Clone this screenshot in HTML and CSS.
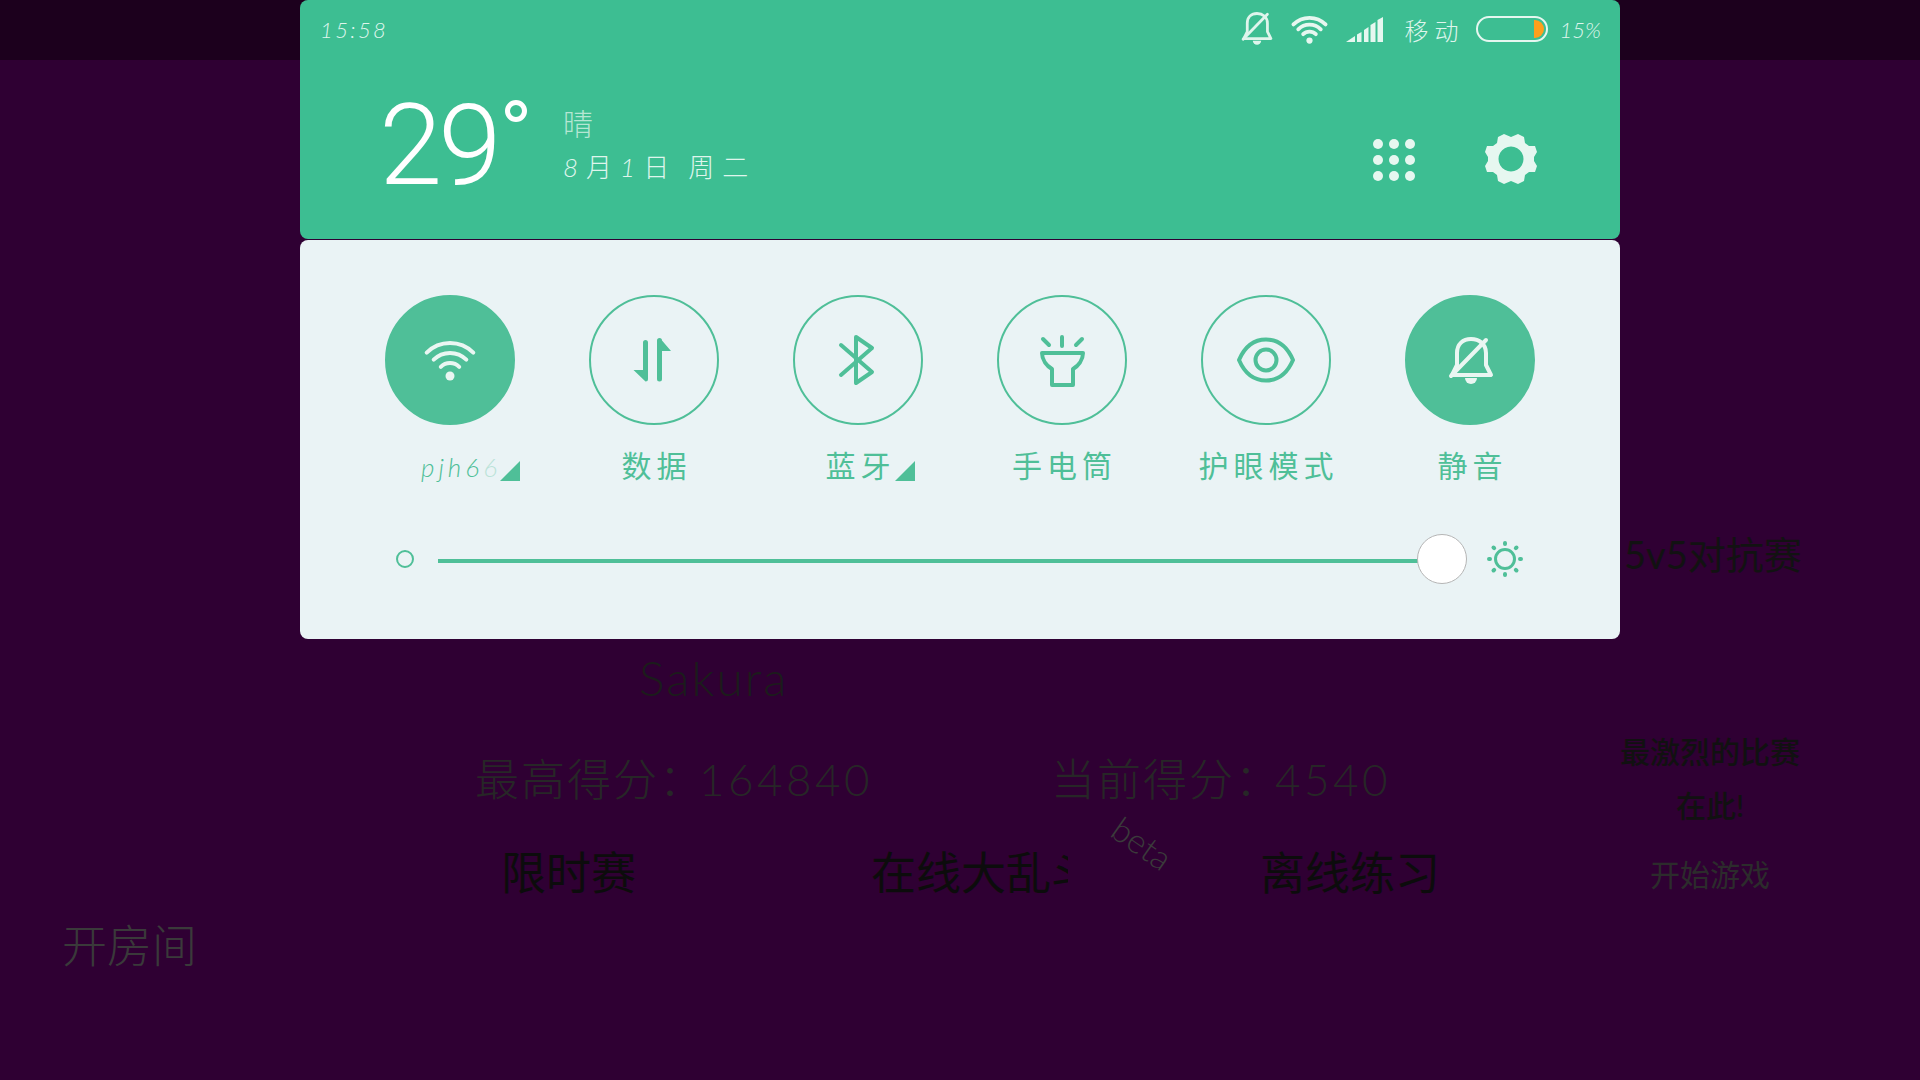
FILE: index.html
```html
<!DOCTYPE html>
<html lang="zh-CN">

<head>
  <meta charset="UTF-8">
  <meta name="viewport" content="width=device-width, initial-scale=1.0">
  <title>Notification shade</title>
  <link rel="stylesheet" href="styles.css">
</head>

<body>
  <svg class="defs" width="0" height="0">
    <defs>
      <g id="ico-wifi">
        <path class="line" d="M41.7 57.700a33 33 0 0 1 46.600 0M48.700 64.700a23 23 0 0 1 32.600 0M55.800 71.800a13 13 0 0 1 18.400 0" />
        <circle class="solid" cx="65" cy="81" r="4.500" />
      </g>
      <g id="ico-bell">
        <path class="line" d="M47 80l5-10V58c0-9 6-14 14-14s15 5 15 14v12l5 10z" />
        <path class="line" d="M81 45L46 81" />
        <path class="solid" d="M60 83h12a6 6 0 0 1-12 0z" />
      </g>
    </defs>
  </svg>

  <div class="game">
    <div class="game-strip"></div>
    <span class="game-text versus">5v5对抗赛</span>
    <span class="game-text sakura">Sakura</span>
    <span class="game-text score-high">最高得分：<span class="digits">164840</span></span>
    <span class="game-text score-now">当前得分：<span class="digits">4540</span></span>
    <span class="game-text mode-time">限时赛</span>
    <span class="game-text mode-online">在线大乱斗</span>
    <span class="game-text beta">beta</span>
    <span class="game-text mode-offline">离线练习</span>
    <span class="game-text room">开房间</span>
    <div class="game-text slogan">最激烈的比赛<br>在此!</div>
    <span class="game-text start">开始游戏</span>
  </div>

  <main class="shade">
    <section class="top-card">
      <div class="status">
        <span class="time">15:58</span>
        <div class="status-right">
          <svg class="st-bell" viewBox="43 42 46 50"><use href="#ico-bell" /></svg>
          <svg class="st-wifi" viewBox="37 44 56 42"><use href="#ico-wifi" /></svg>
          <svg class="st-signal" viewBox="0 0 37 25">
            <polygon points="0,25 9,19 9,25" />
            <polygon points="11,25 11,17.500 15.500,15 15.500,25" />
            <polygon points="18,25 18,13 22.500,10 22.500,25" />
            <polygon points="24.500,25 24.500,8 29.500,5 29.500,25" />
            <polygon points="31.500,25 31.500,3 37,0 37,25" />
          </svg>
          <span class="carrier">移动</span>
          <div class="battery"><div class="battery-fill"></div></div>
          <span class="percent">15%</span>
        </div>
      </div>

      <div class="weather">
        <div class="temp">29<span class="deg"></span></div>
        <div class="weather-info">
          <div class="sky">晴</div>
          <div class="date"><i>8</i>月<i>1</i>日 周二</div>
        </div>
        <div class="dots">
          <span></span><span></span><span></span>
          <span></span><span></span><span></span>
          <span></span><span></span><span></span>
        </div>
        <svg class="gear" viewBox="0 0 52 52">
          <path fill-rule="evenodd" d="M19 1l7 3 7-3 6 3 1 6 4 3 6 0 2 6-3 5 0 4 3 5-2 6-6 0-4 3-1 6-6 3-7-3-7 3-6-3-1-6-4-3-6 0-2-6 3-5 0-4-3-5 2-6 6 0 4-3 1-6zM26 13.500a12.500 12.500 0 1 0 .01 0z" />
        </svg>
      </div>
    </section>

    <section class="ctrl-card">
      <div class="toggles">
        <div class="toggle">
          <div class="round on"><svg class="round-ico" viewBox="0 0 130 130"><use href="#ico-wifi" /></svg></div>
          <div class="label label-wifi">
            <span class="latin">pjh6<span class="fade">6</span></span><span class="corner"></span>
          </div>
        </div>
        <div class="toggle">
          <div class="round">
            <svg class="round-ico" viewBox="0 0 130 130">
              <path class="solid" d="M54 47.500a2.500 2.500 0 0 1 5 0V84a2.500 2.500 0 0 1-2.500 2.500L44.500 75H54z" />
              <path class="solid" d="M76 45.500a2.500 2.500 0 0 0-5 0V84a2.500 2.500 0 0 0 5 0V56h9z" transform="translate(-3 0)" />
            </svg>
          </div>
          <div class="label">数据</div>
        </div>
        <div class="toggle">
          <div class="round">
            <svg class="round-ico" viewBox="0 0 130 130">
              <path class="line" d="M48 50l31 27-16 11V42l16 11-31 27" />
            </svg>
          </div>
          <div class="label">蓝牙<span class="corner"></span></div>
        </div>
        <div class="toggle">
          <div class="round">
            <svg class="round-ico" viewBox="0 0 130 130">
              <path class="line" d="M45 58h41c0 7-5 13-10 16v16H55V74c-5-3-10-9-10-16z" />
              <path class="line" d="M65 42v9M46 44l6 6M85 44l-6 6" />
            </svg>
          </div>
          <div class="label">手电筒</div>
        </div>
        <div class="toggle">
          <div class="round">
            <svg class="round-ico" viewBox="0 0 130 130">
              <path class="line" d="M38 65c6-14 16-20.500 27-20.500S86 51 92 65c-6 14-16 20.500-27 20.500S44 79 38 65z" />
              <circle class="line" cx="65" cy="65" r="10.500" />
            </svg>
          </div>
          <div class="label">护眼模式</div>
        </div>
        <div class="toggle">
          <div class="round on"><svg class="round-ico" viewBox="0 0 130 130"><use href="#ico-bell" /></svg></div>
          <div class="label">静音</div>
        </div>
      </div>

      <div class="brightness">
        <span class="dim"></span>
        <div class="track"><span class="thumb"></span></div>
        <svg class="sun" viewBox="0 0 38 38">
          <circle class="sun-ring" cx="19" cy="19" r="9.500" />
          <path class="rays" d="M19 3v1M19 34v1M3 19h1M34 19h1M7.500 7.500l.7.7M30.500 7.500l-.7.7M7.500 30.500l.7-.7M30.500 30.500l-.7-.7" />
        </svg>
      </div>
    </section>
  </main>
</body>

</html>
```

FILE: styles.css
```css
* {
  box-sizing: border-box;
}

body {
  background: #2f0033;
  font-family: "Lato", "Noto Sans CJK SC", sans-serif;
  height: 1080px;
  margin: 0;
  overflow: hidden;
  width: 1920px;
}

.defs {
  position: absolute;
}

/* game behind the shade */
.game {
  height: 1080px;
  left: 0;
  overflow: hidden;
  position: absolute;
  top: 0;
  width: 1920px;
}

.game-strip {
  background: #1c001d;
  height: 60px;
}

.game-text {
  line-height: 1;
  position: absolute;
  white-space: nowrap;
}

.versus {
  color: #121212;
  font-size: 38px;
  left: 1624px;
  top: 535px;
}

.sakura {
  color: #1c1c1c;
  font-size: 48px;
  font-weight: 300;
  left: 639px;
  letter-spacing: 2px;
  top: 654px;
}

.score-high,
.score-now {
  color: #272727;
  font-size: 44px;
  font-weight: 300;
  letter-spacing: 2px;
}

.digits {
  letter-spacing: 3.5px;
  margin-left: -6px;
}

.score-high {
  left: 475px;
  top: 757px;
}

.score-now {
  left: 1051px;
  top: 757px;
}

.mode-time,
.mode-online,
.mode-offline {
  color: #0c0c0c;
  font-size: 45px;
}

.mode-time {
  left: 501px;
  top: 851px;
}

.mode-online {
  left: 871px;
  overflow: hidden;
  top: 851px;
  width: 197px;
}

.mode-offline {
  left: 1260px;
  top: 851px;
}

.beta {
  color: #3b3b3b;
  font-size: 34px;
  font-weight: 300;
  left: 1110px;
  top: 826px;
  transform: rotate(35deg);
}

.room {
  color: #3a3a3a;
  font-size: 45px;
  font-weight: 300;
  left: 62px;
  top: 924px;
}

.slogan {
  color: #111;
  font-size: 30px;
  font-weight: 500;
  left: 1620px;
  line-height: 54px;
  text-align: center;
  top: 724px;
  width: 180px;
}

.start {
  color: #2c2c2c;
  font-size: 30px;
  left: 1650px;
  top: 859px;
}

/* shade */
.shade {
  left: 300px;
  position: absolute;
  top: 0;
  width: 1320px;
}

.line {
  fill: none;
  stroke: currentColor;
  stroke-linecap: round;
  stroke-linejoin: round;
  stroke-width: var(--line-w, 4);
}

.solid {
  fill: currentColor;
}

.top-card {
  background: #3dbe92;
  border-radius: 8px;
  color: #dff5ec;
  height: 239px;
}

.status {
  align-items: center;
  display: flex;
  height: 58px;
  justify-content: space-between;
  padding: 0 19px 0 20px;
}

.time {
  font-size: 22px;
  font-style: italic;
  font-weight: 300;
  letter-spacing: 2.4px;
}

.percent {
  font-size: 22px;
  font-style: italic;
  font-weight: 300;
}

.status-right {
  align-items: center;
  display: flex;
}

.st-bell {
  height: 35px;
  margin-right: 17px;
  width: 32px;
}

.st-wifi {
  --line-w: 5.5;
  color: #e6f7f0;
  height: 29px;
  margin-right: 17px;
  width: 39px;
}

.st-signal {
  fill: #e6f7f0;
  height: 25px;
  margin-right: 22px;
  width: 37px;
}

.carrier {
  font-size: 24px;
  font-weight: 300;
  letter-spacing: 6px;
  margin-right: 11px;
}

.battery {
  align-items: center;
  border: 2px solid #e6f7f0;
  border-radius: 13px;
  display: flex;
  height: 26px;
  justify-content: flex-end;
  margin-right: 12px;
  padding-right: 2px;
  width: 72px;
}

.battery-fill {
  background: #ff9f1c;
  border-radius: 0 9px 9px 0;
  height: 18px;
  width: 10px;
}

.weather {
  align-items: flex-start;
  display: flex;
  padding: 2px 0 0 79px;
}

.temp {
  color: #fff;
  display: flex;
  font-family: "Roboto", sans-serif;
  font-size: 114px;
  font-weight: 300;
  height: 140px;
  letter-spacing: -4px;
  line-height: 140px;
  margin-top: 15px;
  width: 184px;
}

.deg {
  border: 5px solid #fff;
  border-radius: 50%;
  height: 22px;
  margin: 25px 0 0 8px;
  width: 22px;
}

.weather-info {
  font-weight: 300;
  padding-top: 41px;
  width: 808px;
}

.sky {
  color: #b5e6d3;
  font-size: 30px;
  line-height: 44px;
}

.date {
  color: #dff5ec;
  font-size: 26px;
  letter-spacing: 8px;
  line-height: 44px;
  word-spacing: -4px;
}

.date i {
  font-family: "Lato", sans-serif;
}

.dots {
  display: grid;
  gap: 6px;
  grid-template-columns: repeat(3, 10px);
  margin: 79px 0 0 2px;
}

.dots span {
  background: #e6f7f0;
  border-radius: 50%;
  height: 10px;
}

.gear {
  fill: #e6f7f0;
  height: 52px;
  margin: 73px 0 0 70px;
  width: 52px;
}

.ctrl-card {
  background: #eaf3f5;
  border-radius: 8px;
  color: #4fbf98;
  height: 399px;
  margin-top: 1px;
  padding: 55px 48px 0;
}

.toggles {
  display: grid;
  grid-template-columns: repeat(6, 204px);
}

.toggle {
  align-items: center;
  display: flex;
  flex-direction: column;
}

.round {
  border: 2px solid #4fbf98;
  border-radius: 50%;
  height: 130px;
  position: relative;
  width: 130px;
}

.round.on {
  background: #4fbf98;
  color: #eaf6f2;
}

.round-ico {
  height: 130px;
  left: -2px;
  position: absolute;
  top: -2px;
  width: 130px;
}

.label {
  font-size: 30px;
  font-weight: 400;
  height: 40px;
  letter-spacing: 5px;
  line-height: 40px;
  margin-top: 20px;
  position: relative;
  text-indent: 5px;
  white-space: nowrap;
}

.label-wifi {
  letter-spacing: 4px;
  margin-left: 17px;
}

.latin {
  font-size: 26px;
  font-style: italic;
  font-weight: 300;
}

.fade {
  opacity: 0.3;
}

.corner {
  border-bottom: 20px solid #4fbf98;
  border-left: 20px solid transparent;
  bottom: 4px;
  height: 0;
  left: calc(100% - 1px);
  position: absolute;
  width: 0;
}

.brightness {
  align-items: center;
  display: flex;
  margin-top: 55px;
  padding-left: 48px;
}

.dim {
  border: 2.5px solid #4fbf98;
  border-radius: 50%;
  height: 18px;
  margin-right: 24px;
  width: 18px;
}

.track {
  background: #4fbf98;
  height: 4px;
  margin-top: 4px;
  position: relative;
  width: 980px;
}

/* thumb sits over the end of the track */
.thumb {
  background: #fff;
  border: 1px solid #b5b5b5;
  border-radius: 50%;
  height: 50px;
  left: 979px;
  position: absolute;
  top: -25px;
  width: 50px;
}

.sun {
  height: 38px;
  margin-left: 68px;
  width: 38px;
}

.sun-ring {
  fill: none;
  stroke: currentColor;
  stroke-width: 3;
}

.rays {
  fill: none;
  stroke: currentColor;
  stroke-linecap: round;
  stroke-width: 4;
}
```
